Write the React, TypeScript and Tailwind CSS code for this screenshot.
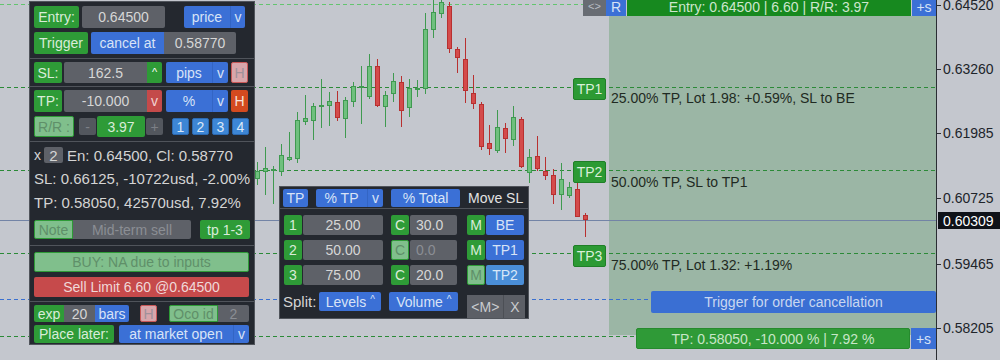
import React from 'react';

type Candle = [number, number, number, number, number, boolean];

// [x, bodyTop, bodyBottom, wickTop, wickBottom, up]
const candles: Candle[] = [
  [257, 171, 179, 162, 185, true],
  [265, 168, 172, 147, 195, true],
  [273, 169, 171, 166, 204, true],
  [281, 155, 172, 144, 176, true],
  [289, 157, 160, 132, 161, true],
  [297, 120, 159, 112, 163, true],
  [305, 118, 122, 95, 125, true],
  [313, 106, 121, 103, 140, true],
  [321, 105, 107, 79, 128, true],
  [329, 101, 106, 92, 126, true],
  [337, 102, 118, 91, 121, false],
  [345, 100, 119, 97, 138, true],
  [353, 86, 102, 82, 107, true],
  [361, 86, 88, 66, 124, true],
  [369, 66, 97, 54, 99, true],
  [377, 66, 106, 59, 107, false],
  [385, 95, 107, 91, 127, true],
  [393, 81, 94, 73, 102, true],
  [401, 82, 111, 76, 127, false],
  [409, 88, 108, 79, 117, true],
  [417, 88, 90, 80, 97, true],
  [425, 29, 89, 13, 94, true],
  [433, 12, 30, 0, 38, true],
  [441, 2, 14, -2, 18, true],
  [449, 6, 49, 2, 53, false],
  [457, 49, 58, 47, 73, false],
  [465, 59, 91, 38, 103, false],
  [473, 93, 104, 75, 109, false],
  [481, 104, 147, 102, 150, false],
  [489, 143, 149, 125, 155, false],
  [497, 127, 151, 110, 153, true],
  [505, 128, 139, 123, 153, false],
  [513, 117, 140, 106, 146, true],
  [521, 119, 167, 117, 168, false],
  [529, 157, 173, 149, 183, true],
  [537, 156, 169, 136, 171, false],
  [545, 171, 176, 157, 180, false],
  [553, 175, 195, 169, 204, false],
  [561, 179, 195, 163, 210, true],
  [569, 187, 196, 182, 198, true],
  [577, 189, 217, 183, 217, false],
  [585, 215, 220, 213, 237, false],
];

function Chart() {
  return (
    <svg className="absolute inset-0" width={1000} height={360}>
      <rect x={609} y={16} width={327} height={319} fill="#9bb6a5" />
      <line x1={0} x2={583} y1={4.5} y2={4.5} stroke="#63c46f" strokeDasharray="4 3" />
      <line x1={0} x2={936} y1={87.5} y2={87.5} stroke="#2b8a37" strokeDasharray="4 3" />
      <line x1={0} x2={936} y1={170.5} y2={170.5} stroke="#2b8a37" strokeDasharray="4 3" />
      <line x1={0} x2={936} y1={253.5} y2={253.5} stroke="#2b8a37" strokeDasharray="4 3" />
      <line x1={0} x2={636} y1={336.5} y2={336.5} stroke="#2b8a37" strokeDasharray="4 3" />
      <line x1={0} x2={651} y1={299.5} y2={299.5} stroke="#3a70d0" strokeDasharray="4 3" />
      <line x1={0} x2={936} y1={220.5} y2={220.5} stroke="#7384a6" />
      {candles.map(([x, bt, bb, wt, wb, up]) => (
        <g key={x}>
          <line x1={x + 0.5} x2={x + 0.5} y1={wt} y2={wb} stroke={up ? '#3f9a50' : '#b83030'} />
          <rect
            x={x - 1.5}
            y={bt + 0.5}
            width={4}
            height={Math.max(bb - bt - 1, 1)}
            fill={up ? '#6fc07e' : '#d44b4b'}
            stroke={up ? '#3f9a50' : '#b83030'}
          />
        </g>
      ))}
      <line x1={936.5} x2={936.5} y1={0} y2={360} stroke="#2a2d33" />
      {[5, 69, 133, 198, 264, 328].map((y) => (
        <line key={y} x1={937} x2={941} y1={y + 0.5} y2={y + 0.5} stroke="#2a2d33" />
      ))}
    </svg>
  );
}

const axisLabel = 'absolute left-[943px] h-[16px] leading-[16px] text-[14px] text-[#20242a]';

function Axis() {
  return (
    <>
      <div className={`${axisLabel} top-[-3px]`}>0.64520</div>
      <div className={`${axisLabel} top-[61px]`}>0.63260</div>
      <div className={`${axisLabel} top-[125px]`}>0.61985</div>
      <div className={`${axisLabel} top-[190px]`}>0.60725</div>
      <div className={`${axisLabel} top-[256px]`}>0.59465</div>
      <div className={`${axisLabel} top-[320px]`}>0.58205</div>
      <div className="absolute left-[938px] top-[212px] flex h-[17px] w-[62px] items-center pl-[5px] text-[14px] text-white bg-[#0f1218]">
        0.60309
      </div>
    </>
  );
}

const tpLabel =
  'absolute left-[573px] flex h-[22px] w-[33px] items-center justify-center rounded-[2px] border border-[#1f7f27] bg-[#2c9a34] text-[14px] text-[#d9efd9]';
const tpText = 'absolute left-[611px] h-[16px] leading-[16px] text-[14px] text-[#1f2a22]';

function ChartObjects() {
  return (
    <>
      <div className="absolute left-[583px] top-[-5px] flex h-[21px] w-[23px] items-center justify-center bg-[#686c73] pt-[2px] text-[11px] text-[#b9bdc3]">
        &lt;&gt;
      </div>
      <div className="absolute left-[606px] top-[-5px] flex h-[21px] w-[20px] items-center justify-center bg-[#3b70d6] pt-[2px] text-[14px] text-[#d6e2f6]">
        R
      </div>
      <div className="absolute left-[627px] top-[-5px] flex h-[21px] w-[284px] items-center justify-center bg-[#17891f] pt-[2px] text-[14px] text-[#cde6cd]">
        Entry: 0.64500 | 6.60 | R/R: 3.97
      </div>
      <div className="absolute left-[912px] top-[-5px] flex h-[21px] w-[24px] items-center justify-center bg-[#3b70d6] pt-[2px] text-[14px] text-[#d6e2f6]">
        +s
      </div>

      <div className={`${tpLabel} top-[78px]`}>TP1</div>
      <div className={`${tpText} top-[90px]`}>25.00% TP, Lot 1.98: +0.59%, SL to BE</div>
      <div className={`${tpLabel} top-[161px]`}>TP2</div>
      <div className={`${tpText} top-[174px]`}>50.00% TP, SL to TP1</div>
      <div className={`${tpLabel} top-[245px]`}>TP3</div>
      <div className={`${tpText} top-[257px]`}>75.00% TP, Lot 1.32: +1.19%</div>

      <div className="absolute left-[651px] top-[291px] flex h-[22px] w-[285px] items-center justify-center rounded-[2px] bg-[#3a6fd3] text-[14px] text-[#c9d7f0]">
        Trigger for order cancellation
      </div>
      <div className="absolute left-[636px] top-[328px] flex h-[21px] w-[274px] items-center justify-center rounded-[2px] border border-[#268a2e] bg-[#2f9a37] text-[14px] text-[#c8e6c8]">
        TP: 0.58050, -10.000 % | 7.92 %
      </div>
      <div className="absolute left-[911px] top-[328px] flex h-[21px] w-[25px] items-center justify-center bg-[#3b70d6] text-[14px] text-[#d6e2f6]">
        +s
      </div>
    </>
  );
}

const box = 'flex shrink-0 items-center justify-center rounded-[2px]';
const green = `${box} bg-[#2e9b37] text-[#d9ecd9]`;
const greenOff = `${box} border border-[#2e9b37] bg-[#80bf8c] text-[#5f8f69]`;
const gray = `${box} bg-[#5e6168] text-[#d6d6d6]`;
const grayOff = `${box} bg-[#5e6168] text-[#8b8e94]`;
const blue = `${box} bg-[#3b70d6] text-[#d8e3f6]`;
const sep = 'border-b border-[#50545b]';

function LeftPanel() {
  return (
    <div className="absolute left-[29px] top-[1px] w-[226px] border border-[#50545b] bg-[#24282f] text-[14px] text-[#d6d6d6]">
      <div className={`flex flex-col gap-[4px] px-[4px] py-[4px] ${sep}`}>
        <div className="flex h-[22px]">
          <div className={`${green} w-[45px]`}>Entry:</div>
          <div className={`${gray} ml-[3px] w-[83px]`}>0.64500</div>
          <div className={`${blue} ml-[19px] w-[46px] rounded-r-none`}>price</div>
          <div className={`${blue} w-[15px] rounded-l-none border-l border-[#3365c4]`}>v</div>
        </div>
        <div className="flex h-[22px]">
          <div className={`${green} w-[54px]`}>Trigger</div>
          <div className={`${blue} ml-[3px] w-[73px] rounded-r-none`}>cancel at</div>
          <div className={`${gray} w-[72px] rounded-l-none`}>0.58770</div>
        </div>
      </div>

      <div className={`px-[4px] py-[3px] ${sep}`}>
        <div className="flex h-[21px]">
          <div className={`${green} w-[28px]`}>SL:</div>
          <div className={`${gray} ml-[2px] w-[83px] rounded-r-none`}>162.5</div>
          <div className={`${green} w-[15px] rounded-l-none text-[11px] text-white`}>^</div>
          <div className={`${blue} ml-[4px] w-[46px] rounded-r-none`}>pips</div>
          <div className={`${blue} w-[16px] rounded-l-none border-l border-[#3365c4]`}>v</div>
          <div className={`${box} ml-[3px] w-[17px] border border-[#c95858] bg-[#d8a6ab] text-[#a0919a]`}>H</div>
        </div>
      </div>

      <div className={`flex flex-col gap-[4px] px-[4px] pb-[4px] pt-[3px] ${sep}`}>
        <div className="flex h-[22px]">
          <div className={`${green} w-[28px]`}>TP:</div>
          <div className={`${gray} ml-[2px] w-[83px] rounded-r-none`}>-10.000</div>
          <div className={`${box} w-[15px] rounded-l-none bg-[#c44a4a] text-[#f2d2d2]`}>v</div>
          <div className={`${blue} ml-[4px] w-[46px] rounded-r-none`}>%</div>
          <div className={`${blue} w-[16px] rounded-l-none border-l border-[#3365c4]`}>v</div>
          <div className={`${box} ml-[3px] w-[17px] bg-[#d44a1f] text-[#f6e2da]`}>H</div>
        </div>
        <div className="flex h-[21px] items-center">
          <div className={`${greenOff} h-[21px] w-[40px]`}>R/R :</div>
          <div className={`${box} ml-[5px] h-[17px] w-[17px] bg-[#53575e] text-[#7d8087]`}>-</div>
          <div className={`${green} ml-[1px] h-[21px] w-[48px]`}>3.97</div>
          <div className={`${box} ml-[1px] h-[17px] w-[17px] bg-[#53575e] text-[#7d8087]`}>+</div>
          <div className="ml-[9px] flex gap-[3px]">
            <div className={`${box} h-[17px] w-[17px] border border-[#2c69b0] bg-[#3d86d5] text-[#dbe9f8]`}>1</div>
            <div className={`${box} h-[17px] w-[17px] border border-[#2c69b0] bg-[#3d86d5] text-[#dbe9f8]`}>2</div>
            <div className={`${box} h-[17px] w-[17px] border border-[#2c69b0] bg-[#3d86d5] text-[#dbe9f8]`}>3</div>
            <div className={`${box} h-[17px] w-[17px] border border-[#2c69b0] bg-[#3d86d5] text-[#dbe9f8]`}>4</div>
          </div>
        </div>
      </div>

      <div className={`px-[4px] pb-[6px] pt-[5px] text-[15px] text-[#d4d4d4] ${sep}`}>
        <div className="flex h-[16px] items-center">
          <span className="text-[14px]">x</span>
          <div className={`${gray} ml-[3px] h-[16px] w-[19px] text-[15px]`}>2</div>
          <span className="ml-[4px]">En: 0.64500, Cl: 0.58770</span>
        </div>
        <div className="mt-[5px] flex h-[20px] items-center">SL: 0.66125, -10722usd, -2.00%</div>
        <div className="mt-[4px] flex h-[20px] items-center">TP: 0.58050, 42570usd, 7.92%</div>
        <div className="mt-[8px] flex h-[19px] text-[14px]">
          <div className={`${greenOff} w-[39px] rounded-r-none`}>Note</div>
          <div className={`${grayOff} w-[118px] rounded-l-none`}>Mid-term sell</div>
          <div className={`${green} ml-[9px] w-[50px]`}>tp 1-3</div>
        </div>
      </div>

      <div className={`flex flex-col gap-[5px] px-[4px] pb-[4px] pt-[6px] ${sep}`}>
        <div className={`${greenOff} h-[20px] w-[215px]`}>BUY: NA due to inputs</div>
        <div className={`${box} h-[20px] w-[215px] bg-[#c64a4b] text-[#f0d8d8]`}>Sell Limit 6.60 @0.64500</div>
      </div>

      <div className="flex flex-col gap-[3px] px-[4px] pb-[1px] pt-[3px]">
        <div className="flex h-[17px]">
          <div className={`${green} w-[30px] rounded-r-none`}>exp</div>
          <div className={`${gray} w-[31px] rounded-none`}>20</div>
          <div className={`${blue} w-[34px] rounded-l-none`}>bars</div>
          <div className={`${box} ml-[11px] w-[17px] border border-[#c95858] bg-[#d8a6ab] text-[#a0919a]`}>H</div>
          <div className={`${greenOff} ml-[12px] w-[49px] rounded-r-none`}>Oco id</div>
          <div className={`${grayOff} w-[31px] rounded-l-none`}>2</div>
        </div>
        <div className="flex h-[18px]">
          <div className={`${green} w-[80px]`}>Place later:</div>
          <div className={`${blue} ml-[5px] w-[114px] rounded-r-none`}>at market open</div>
          <div className={`${blue} w-[16px] rounded-l-none border-l border-[#3365c4]`}>v</div>
        </div>
      </div>
    </div>
  );
}

function TpRow({ n, vol, c, cOn, mOn, to }: { n: string; vol: string; c: string; cOn: boolean; mOn: boolean; to: string }) {
  return (
    <div className="flex h-[20px]">
      <div className={`${green} w-[18px]`}>{n}</div>
      <div className={`${gray} ml-[1px] w-[80px]`}>{vol}</div>
      <div className={`${cOn ? green : greenOff} ml-[8px] w-[18px]`}>C</div>
      <div className={`${cOn ? gray : grayOff} ml-[1px] w-[47px] justify-start pl-[6px]`}>{c}</div>
      <div className={`${mOn ? green : greenOff} ml-[10px] w-[18px]`}>M</div>
      <div
        className={`${box} ml-[1px] w-[38px] ${mOn ? 'bg-[#3b70d6] text-[#d8e3f6]' : 'bg-[#4a8ed8] text-[#d8e8f8]'}`}
      >
        {to}
      </div>
    </div>
  );
}

function TpPanel() {
  return (
    <div className="absolute left-[279px] top-[186px] w-[250px] border border-[#50545b] bg-[#24282f] text-[14px] text-[#d6d6d6]">
      <div className={`flex h-[22px] items-center px-[3px] ${sep}`}>
        <div className={`${blue} h-[18px] w-[25px]`}>TP</div>
        <div className={`${blue} ml-[8px] h-[18px] w-[51px] rounded-r-none`}>% TP</div>
        <div className={`${blue} h-[18px] w-[16px] rounded-l-none border-l border-[#3365c4]`}>v</div>
        <div className={`${blue} ml-[8px] h-[18px] w-[69px]`}>% Total</div>
        <span className="ml-[8px] text-[#e2e2e2]">Move SL</span>
      </div>
      <div className="flex flex-col gap-[5px] px-[4px] pt-[6px]">
        <TpRow n="1" vol="25.00" c="30.0" cOn mOn to="BE" />
        <TpRow n="2" vol="50.00" c="0.0" cOn={false} mOn to="TP1" />
        <TpRow n="3" vol="75.00" c="20.0" cOn mOn={false} to="TP2" />
      </div>
      <div className="mt-[7px] flex h-[26px] pl-[3px]">
        <span className="flex h-[19px] items-center text-[15px] text-[#d4d4d4]">Split:</span>
        <div className={`${blue} ml-[3px] h-[19px] w-[62px] gap-[4px]`}>
          Levels<span className="-mt-[4px] text-[10px]">^</span>
        </div>
        <div className={`${blue} ml-[8px] h-[19px] w-[69px] gap-[4px]`}>
          Volume<span className="-mt-[4px] text-[10px]">^</span>
        </div>
        <div className={`${box} ml-[9px] h-[23px] w-[36px] self-end rounded-none bg-[#5c5f66] text-[#c9cbcf]`}>&lt;M&gt;</div>
        <div className={`${box} h-[23px] w-[22px] self-end rounded-none border-l border-[#4c4f55] bg-[#5c5f66] text-[#c9cbcf]`}>X</div>
      </div>
    </div>
  );
}

export default function App() {
  return (
    <div className="relative h-[360px] w-[1000px] overflow-hidden bg-[#c4c7ce] font-['Liberation_Sans',Arial,sans-serif] leading-none">
      <Chart />
      <Axis />
      <ChartObjects />
      <LeftPanel />
      <TpPanel />
    </div>
  );
}
